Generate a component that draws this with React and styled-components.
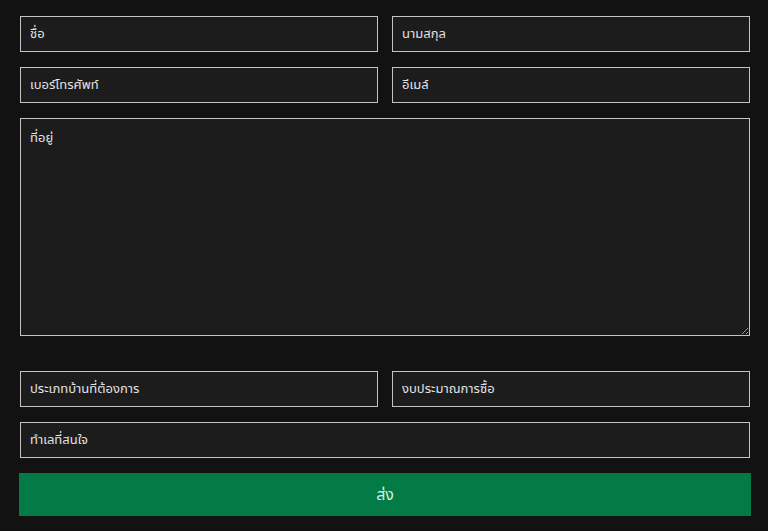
import React from "react";
import styled, { createGlobalStyle } from "styled-components";

const Global = createGlobalStyle`
  html, body { margin: 0; padding: 0; background: #121212; }
  body { font-family: "Noto Sans Thai", "Noto Sans", "Liberation Sans", sans-serif; }
`;

const Form = styled.form`
  display: grid;
  grid-template-columns: 1fr 1fr;
  column-gap: 14px;
  row-gap: 15px;
  padding: 16px 18px 16px 20px;
  box-sizing: border-box;
  width: 768px;
`;

const Field = styled.input`
  grid-column: ${(p) => (p.$full ? "1 / -1" : "auto")};
  height: 36px;
  box-sizing: border-box;
  background: #1c1c1c;
  border: 1px solid #c4c4c4;
  border-radius: 0;
  color: #e6e6e6;
  font-family: inherit;
  font-size: 13px;
  padding: 0 9px;
  outline: none;
  &::placeholder { color: #e2e2e2; opacity: 1; }
`;

const Area = styled.textarea`
  grid-column: 1 / -1;
  height: 218px;
  box-sizing: border-box;
  background: #1c1c1c;
  border: 1px solid #c4c4c4;
  border-radius: 0;
  color: #e6e6e6;
  font-family: inherit;
  font-size: 13px;
  padding: 9px 9px;
  margin-bottom: 20px;
  outline: none;
  &::placeholder { color: #e2e2e2; opacity: 1; }
`;

const Submit = styled.button`
  grid-column: 1 / -1;
  height: 43px;
  margin-left: -1px;
  margin-right: -1px;
  background: #037b47;
  border: none;
  color: #cfeedd;
  font-family: inherit;
  font-size: 16px;
  cursor: pointer;
`;

export default function App() {
  return (
    <>
      <Global />
      <Form onSubmit={(e) => e.preventDefault()}>
        <Field placeholder="ชื่อ" />
        <Field placeholder="นามสกุล" />
        <Field placeholder="เบอร์โทรศัพท์" />
        <Field placeholder="อีเมล์" />
        <Area placeholder="ที่อยู่" />
        <Field placeholder="ประเภทบ้านที่ต้องการ" />
        <Field placeholder="งบประมาณการซื้อ" />
        <Field $full placeholder="ทำเลที่สนใจ" />
        <Submit type="submit">ส่ง</Submit>
      </Form>
    </>
  );
}
